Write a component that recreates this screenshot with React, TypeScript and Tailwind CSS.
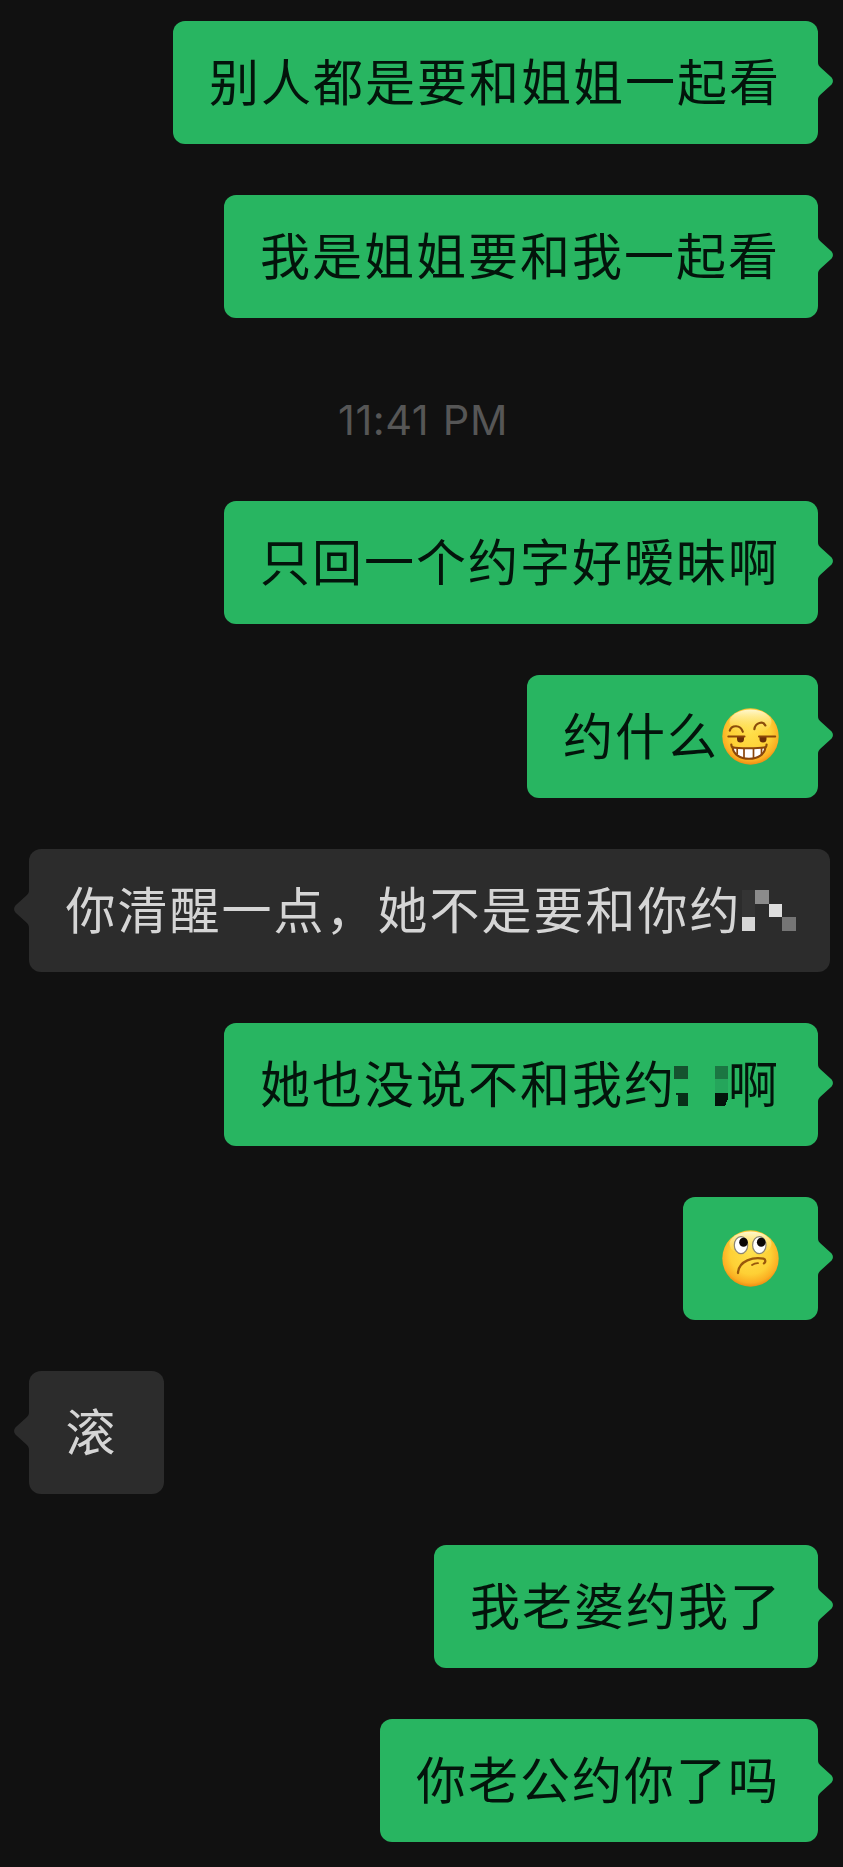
import type { ReactNode } from "react";
import clsx from "clsx";

type Message = {
  id: number;
  mine: boolean;
  width: string;
  body: ReactNode;
};

function Text({ children }: { children: string }) {
  return <span className="pb-[8px]">{children}</span>;
}

function SmirkEmoji() {
  return (
    <svg viewBox="0 0 57 57" className="ml-[3px] h-[57px] w-[57px] shrink-0">
      <defs>
        <radialGradient id="smirk-face" cx="50%" cy="42%" r="58%">
          <stop offset="0" stopColor="#ffdf4a" />
          <stop offset="0.62" stopColor="#fed035" />
          <stop offset="0.88" stopColor="#fbae22" />
          <stop offset="1" stopColor="#ee8c12" />
        </radialGradient>
        <linearGradient id="smirk-shine" x1="0" y1="0" x2="0" y2="1">
          <stop offset="0" stopColor="#fffbd8" stopOpacity="0.95" />
          <stop offset="1" stopColor="#ffe765" stopOpacity="0" />
        </linearGradient>
      </defs>
      <circle cx="28.5" cy="28.5" r="28.2" fill="url(#smirk-face)" />
      <ellipse cx="28.5" cy="14" rx="21" ry="12.5" fill="url(#smirk-shine)" />
      <g fill="none" stroke="#8b4d0b" strokeWidth="2.2" strokeLinecap="round">
        <path d="M7.8 22.6c1.6-5.8 10.8-6.2 13 1.2" />
        <path d="M32.4 21.2c1-7.2 8.8-8.2 11-3.8" />
      </g>
      <g fill="#6b2f06">
        <path d="M15 28.5h7v2.5a3.5 3.5 0 0 1-7 0z" />
        <path d="M37.5 28.5h7v2.5a3.5 3.5 0 0 1-7 0z" />
      </g>
      <path d="M6.3 28.4h16.2M37 28.4h16.2" stroke="#8b4708" strokeWidth="2" strokeLinecap="round" />
      <path
        d="M10.5 39.2c5 1.3 27.5 1.3 33 0-.6 7-7.5 11.6-16.5 11.6S11.1 46.2 10.5 39.2z"
        fill="#fff"
        stroke="#8b470b"
        strokeWidth="2"
      />
      <path d="M22 40v10.5M31.5 40v10.5M15.2 40v6.5M39.5 40v6" stroke="#8b470b" strokeWidth="1.7" fill="none" />
      <path d="M9.3 36.5c0 1.6.5 2.7 1.6 3.2M44.6 36.5c0 1.6-.5 2.7-1.6 3.2" fill="none" stroke="#8b4d0b" strokeWidth="2.2" strokeLinecap="round" />
    </svg>
  );
}

function RollingEyesEmoji() {
  return (
    <svg viewBox="0 0 57 57" className="ml-[3px] h-[57px] w-[57px] shrink-0">
      <defs>
        <radialGradient id="roll-face" cx="50%" cy="42%" r="58%">
          <stop offset="0" stopColor="#ffdf4a" />
          <stop offset="0.62" stopColor="#fed035" />
          <stop offset="0.88" stopColor="#fbae22" />
          <stop offset="1" stopColor="#ee8c12" />
        </radialGradient>
        <linearGradient id="roll-shine" x1="0" y1="0" x2="0" y2="1">
          <stop offset="0" stopColor="#fffbd8" stopOpacity="0.95" />
          <stop offset="1" stopColor="#ffe765" stopOpacity="0" />
        </linearGradient>
      </defs>
      <circle cx="28.5" cy="28.5" r="28.2" fill="url(#roll-face)" />
      <ellipse cx="28.5" cy="14" rx="21" ry="12.5" fill="url(#roll-shine)" />
      <g fill="#fff" stroke="#8d8672" strokeWidth="1.2">
        <ellipse cx="19" cy="15.2" rx="6.7" ry="8.5" />
        <ellipse cx="37.3" cy="15.2" rx="6.7" ry="8.5" />
      </g>
      <g fill="#0b0705">
        <ellipse cx="21.5" cy="12.3" rx="4.3" ry="4.5" />
        <ellipse cx="39.2" cy="12.3" rx="4.3" ry="4.5" />
      </g>
      <g fill="none" stroke="#99580b" strokeLinecap="round">
        <path d="M16 43c.7-12.5 15.8-16.4 25.5-14.3 2.6.8 2.2 3.5.4 4.7" strokeWidth="2.3" />
        <path d="M30 35c1.8-1.3 4-2 6-1.9" strokeWidth="1.8" />
      </g>
    </svg>
  );
}

// Pixelated cells covering one character
function GreyMosaic() {
  return (
    <svg viewBox="0 0 52 52" className="h-[52px] w-[52px] shrink-0 overflow-visible" shapeRendering="crispEdges">
      <rect x="0" y="5" width="13" height="27" fill="#343434" />
      <rect x="13" y="5" width="14" height="14" fill="#8b8b8b" />
      <rect x="27" y="19" width="13" height="13" fill="#dedede" />
      <rect x="0" y="32" width="13" height="14" fill="#d6d6d6" />
      <rect x="40" y="32" width="14" height="14" fill="#757575" />
    </svg>
  );
}

function GreenMosaic() {
  return (
    <svg viewBox="0 0 52 52" className="h-[52px] w-[52px] shrink-0 overflow-visible" shapeRendering="crispEdges">
      <rect x="-2" y="7" width="14" height="13" fill="#15532f" />
      <path d="M0 34h12v13H2V36H0z" fill="#082f19" />
      <rect x="39" y="7" width="13" height="13" fill="#1b7642" />
      <rect x="39" y="20" width="13" height="14" fill="#25a55b" />
      <path d="M39 34h13v6l-3 7H39z" fill="#03140b" />
    </svg>
  );
}

const BEFORE_TIME: Message[] = [
  { id: 1, mine: true, width: "w-[645px]", body: <Text>别人都是要和姐姐一起看</Text> },
  { id: 2, mine: true, width: "w-[594px]", body: <Text>我是姐姐要和我一起看</Text> },
];

const AFTER_TIME: Message[] = [
  { id: 3, mine: true, width: "w-[594px]", body: <Text>只回一个约字好暧昧啊</Text> },
  { id: 4, mine: true, width: "w-[291px]", body: <><Text>约什么</Text><SmirkEmoji /></> },
  { id: 5, mine: false, width: "w-[801px]", body: <><Text>你清醒一点，她不是要和你约</Text><GreyMosaic /></> },
  { id: 6, mine: true, width: "w-[594px]", body: <><Text>她也没说不和我约</Text><GreenMosaic /><Text>啊</Text></> },
  { id: 7, mine: true, width: "w-[135px]", body: <RollingEyesEmoji /> },
  { id: 8, mine: false, width: "w-[135px]", body: <Text>滚</Text> },
  { id: 9, mine: true, width: "w-[384px]", body: <Text>我老婆约我了</Text> },
  { id: 10, mine: true, width: "w-[438px]", body: <Text>你老公约你了吗</Text> },
];

function Bubble({ message }: { message: Message }) {
  const { mine, width, body } = message;

  return (
    <div
      className={clsx(
        "relative flex h-[123px] shrink-0 items-center whitespace-nowrap rounded-[12px]",
        width,
        mine
          ? "mr-[25px] self-end bg-[#28b561] pl-[36px] text-[#03140b]"
          : "ml-[29px] self-start bg-[#2c2c2c] pl-[36.5px] text-[#d5d5d5]"
      )}
    >
      {body}
      <svg
        viewBox="0 0 16 38"
        className={clsx(
          "absolute top-[41px] h-[38px] w-[16px]",
          mine ? "-right-[15px] text-[#28b561]" : "-left-[15px] -scale-x-100 text-[#2c2c2c]"
        )}
      >
        <path d="M0 0h1c0 2.5.8 4 2.6 5.5l11 10q2.7 3.5 0 7l-11 10C1.8 34 1 35.5 1 38H0z" fill="currentColor" />
      </svg>
    </div>
  );
}

export default function App() {
  return (
    <main className="flex h-[1867px] w-[843px] flex-col overflow-hidden bg-[#111111] pt-[21px] font-['Noto_Sans_CJK_SC',sans-serif] text-[50px] leading-[74px] tracking-[2px]">
      <div className="flex flex-col gap-[51px]">
        {BEFORE_TIME.map((message) => (
          <Bubble key={message.id} message={message} />
        ))}
      </div>

      <time className="flex h-[183px] items-center justify-center pl-[3px] pt-[23px] font-['Inter',sans-serif] text-[41.5px] leading-none tracking-[0.5px] text-[#565656] [word-spacing:1.5px]">
        11:41 PM
      </time>

      <div className="flex flex-col gap-[51px]">
        {AFTER_TIME.map((message) => (
          <Bubble key={message.id} message={message} />
        ))}
      </div>
    </main>
  );
}
